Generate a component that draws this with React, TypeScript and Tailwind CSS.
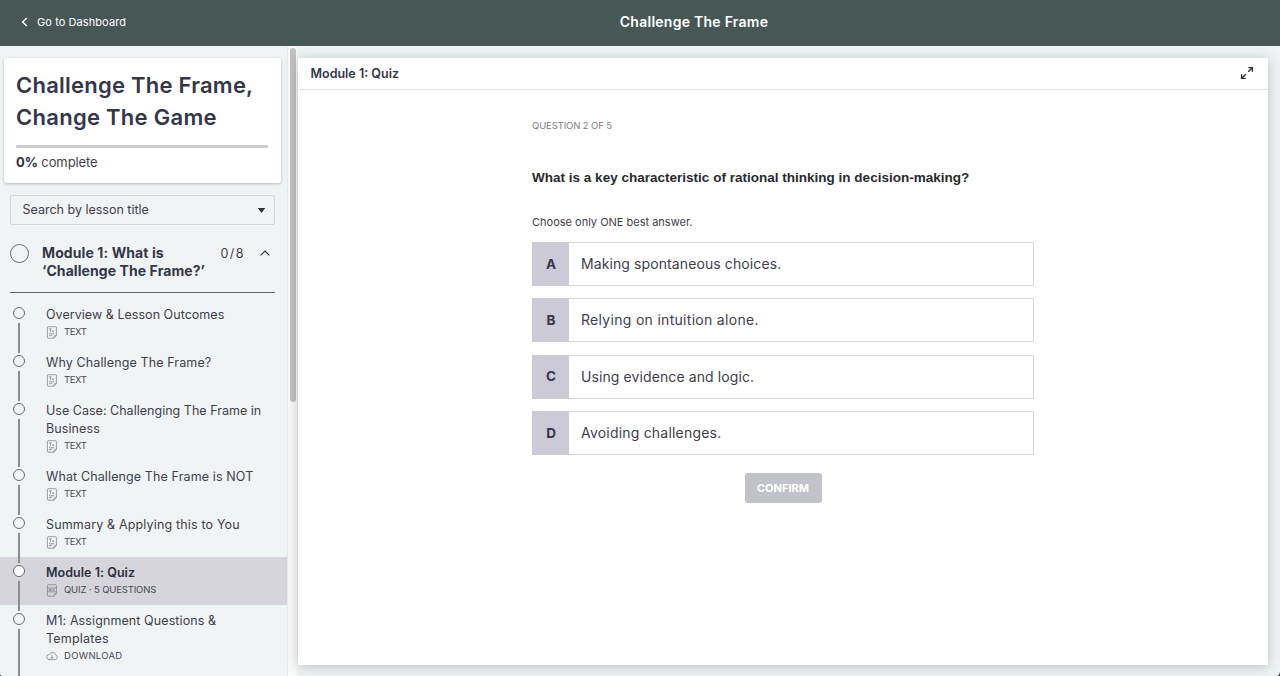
import clsx from "clsx";

type Lesson = {
  lines: { text: string; tracking: string }[];
  kind: "text" | "quiz" | "download";
  meta: string;
  metaTracking: string;
  active?: boolean;
};

const lessons: Lesson[] = [
  { lines: [{ text: "Overview & Lesson Outcomes", tracking: "tracking-[0.04px]" }], kind: "text", meta: "TEXT", metaTracking: "tracking-[-0.4px]" },
  { lines: [{ text: "Why Challenge The Frame?", tracking: "tracking-[0.12px]" }], kind: "text", meta: "TEXT", metaTracking: "tracking-[-0.4px]" },
  {
    lines: [
      { text: "Use Case: Challenging The Frame in", tracking: "tracking-[0.02px]" },
      { text: "Business", tracking: "tracking-[0.1px]" },
    ],
    kind: "text",
    meta: "TEXT",
    metaTracking: "tracking-[-0.4px]",
  },
  { lines: [{ text: "What Challenge The Frame is NOT", tracking: "tracking-[0.12px]" }], kind: "text", meta: "TEXT", metaTracking: "tracking-[-0.4px]" },
  { lines: [{ text: "Summary & Applying this to You", tracking: "tracking-[0.16px]" }], kind: "text", meta: "TEXT", metaTracking: "tracking-[-0.4px]" },
  { lines: [{ text: "Module 1: Quiz", tracking: "tracking-[0.04px]" }], kind: "quiz", meta: "QUIZ · 5 QUESTIONS", metaTracking: "tracking-[-0.14px]", active: true },
  {
    lines: [
      { text: "M1: Assignment Questions &", tracking: "tracking-[0.1px]" },
      { text: "Templates", tracking: "tracking-[0.2px]" },
    ],
    kind: "download",
    meta: "DOWNLOAD",
    metaTracking: "tracking-[0.3px]",
  },
];

const answers = [
  { letter: "A", text: "Making spontaneous choices.", tracking: "tracking-[0.1px]" },
  { letter: "B", text: "Relying on intuition alone.", tracking: "tracking-[0.3px]" },
  { letter: "C", text: "Using evidence and logic.", tracking: "tracking-[0.1px]" },
  { letter: "D", text: "Avoiding challenges.", tracking: "tracking-[0.2px]" },
];

function KindIcon({ kind }: { kind: Lesson["kind"] }) {
  if (kind === "download") {
    return (
      <svg className="shrink-0" width="12" height="12" viewBox="0 0 12 12" fill="none" stroke="#85858f" strokeWidth="0.8" strokeLinecap="round" strokeLinejoin="round">
        <path d="M3 9.6h6.2a2.3 2.3 0 0 0 .5-4.5A3.2 3.2 0 0 0 3.6 4.4 2.6 2.6 0 0 0 3 9.6Z" />
        <path d="M6 5.6v2.6M5 7.3l1 1 1-1" />
      </svg>
    );
  }
  return (
    <svg className="shrink-0" width="12" height="13" viewBox="0 0 12 13" fill="none" stroke="#85858f" strokeWidth="0.8" strokeLinejoin="round">
      <path d="M1.4 1.3a.6.6 0 0 1 .6-.6h7.8a.6.6 0 0 1 .6.6v8.4L8 12.2H2a.6.6 0 0 1-.6-.6Z" />
      <path d="M10.4 9.7H8.6a.6.6 0 0 0-.6.6v1.9" />
      {kind === "text" ? (
        <path d="M2.9 2.9h2.8M4.3 2.9v3M6.2 4.4l1.7 1.7M7.9 4.4 6.2 6.1M3 7.8h5.4M3 9.6h3.2" />
      ) : (
        <path d="M1.4 4h9M1.4 7.8h9M3.2 5.1h1.3v1.5H3.2zM5.7 5v1.7M6.9 5.1h1.5L7 6.6h1.4" />
      )}
    </svg>
  );
}

function LessonRow({ lesson, first }: { lesson: Lesson; first: boolean }) {
  return (
    <li className={clsx("flex shrink-0 pl-[12px]", lesson.active && "bg-[#d5d5db]")}>
      <div className="flex w-[14px] shrink-0 flex-col items-center">
        <span className={clsx("h-[6px] w-[1.5px]", !first && "bg-[#8b8d95]")} />
        <span className={clsx("mt-[2px] size-[12px] shrink-0 rounded-full border-[1.3px] border-[#686a74]", lesson.active && "bg-white")} />
        <span className="mt-[4px] w-[1.5px] grow bg-[#8b8d95]" />
      </div>
      <div className="ml-[20px] pt-[6.5px] pb-[6px] whitespace-nowrap">
        {lesson.lines.map((l) => (
          <p key={l.text} className={clsx("text-[12.5px] leading-[18px]", l.tracking, lesson.active ? "font-semibold text-[#2f3040]" : "text-[#3f404d]")}>
            {l.text}
          </p>
        ))}
        <div className="-mt-[0.5px] flex h-[18px] items-center gap-[6px]">
          <KindIcon kind={lesson.kind} />
          <span className={clsx("text-[9.5px] leading-[18px] text-[#484955]", lesson.metaTracking)}>{lesson.meta}</span>
        </div>
      </div>
    </li>
  );
}

function Sidebar() {
  return (
    <aside className="flex w-[287px] shrink-0 flex-col overflow-hidden">
      <section className="mt-[12px] ml-[4px] h-[125px] w-[277px] shrink-0 rounded-[3px] bg-white px-3 pt-[12px] whitespace-nowrap shadow-[0_1px_3px_rgba(60,70,75,0.35)]">
        <h1 className="text-[22px] leading-[31.5px] font-semibold text-[#35364a]">
          <span className="block tracking-[0.24px]">Challenge The Frame,</span>
          <span className="block tracking-[0.28px]">Change The Game</span>
        </h1>
        <div className="mt-[12px] h-[3px] w-[252px] rounded-full bg-[#cbcad6]" />
        <p className="mt-[5px] text-[13px] leading-[18px] tracking-[-0.1px] text-[#3f404d]">
          <b className="font-bold text-[#2f3040]">0%</b> complete
        </p>
      </section>

      <div className="mt-[12px] ml-[10px] flex h-[30px] w-[265px] shrink-0 items-center justify-between rounded-[2px] border border-[#d3d5d9] pr-[8px] pl-[11.5px]">
        <span className="text-[12.5px] text-[#3f404d]">Search by lesson title</span>
        <svg width="9" height="5" viewBox="0 0 9 5" fill="#2f3040">
          <path d="M.8 0h7.4L4.5 4.9Z" />
        </svg>
      </div>

      <div className="mx-[10px] mt-[19px] flex h-[49px] w-[265px] shrink-0 border-b border-[#62646d]">
        <span className="size-[18.5px] shrink-0 rounded-full border-[1.5px] border-[#686a74]" />
        <h2 className="ml-[13.5px] w-[178.5px] text-[14px] leading-[18px] font-bold whitespace-nowrap text-[#35364a]">
          <span className="block tracking-[0.1px]">Module 1: What is</span>
          <span className="block tracking-[0.08px]">‘Challenge The Frame?’</span>
        </h2>
        <span className="text-[12.5px] leading-[19px] tracking-[1.4px] text-[#3f404d]">0/8</span>
        <svg className="mt-[6px] mr-[5px] ml-auto" width="10" height="6" viewBox="0 0 10 6" fill="none" stroke="#2f3040" strokeWidth="1.2">
          <path d="M.6 5.4 5 1l4.4 4.4" />
        </svg>
      </div>

      <ul className="mt-[6px] flex flex-col">
        {lessons.map((lesson, i) => (
          <LessonRow key={lesson.lines[0].text} lesson={lesson} first={i === 0} />
        ))}
        <li className="flex pl-[12px]">
          <div className="flex w-[14px] justify-center">
            <span className="h-[6px] w-[1.5px] bg-[#8b8d95]" />
          </div>
        </li>
      </ul>
    </aside>
  );
}

function Quiz() {
  return (
    <main className="mt-[12px] ml-px flex h-[607px] w-[970px] shrink-0 flex-col bg-white shadow-[0_2px_12px_rgba(60,75,80,0.3)]">
      <div className="flex h-[32px] shrink-0 items-center justify-between border-b-[1.5px] border-[#e2e3e5] pr-[14px] pl-[12.5px]">
        <h3 className="pt-px text-[12.5px] font-semibold text-[#35364a]">Module 1: Quiz</h3>
        <svg className="mb-px" width="14" height="14" viewBox="0 0 14 14" fill="none" stroke="#2f3040" strokeWidth="1.4">
          <path d="M8.2 5.8 11.8 2.2M5.8 8.2 2.2 11.8" />
          <path d="M8.3 1.6h4.1v4.1M5.7 12.4H1.6V8.3" />
        </svg>
      </div>

      <div className="flex w-[502px] flex-col self-center whitespace-nowrap">
        <p className="mt-[28px] text-[9.5px] leading-[16px] tracking-[-0.12px] text-[#7b7c86]">QUESTION 2 OF 5</p>
        <p className="mt-[34px] font-['Liberation_Sans',sans-serif] text-[13.5px] leading-[20px] font-bold tracking-[0.01px] text-[#2a2a2c]">
          What is a key characteristic of rational thinking in decision-making?
        </p>
        <p className="mt-[26px] text-[11px] leading-[16px] text-[#3f404d]">Choose only ONE best answer.</p>

        <div className="mt-[12px] flex flex-col gap-[12.3px]">
          {answers.map((a) => (
            <button key={a.letter} type="button" className="flex h-[44px] items-stretch border border-[#d6d7da] text-left">
              <span className="-my-px -ml-px flex w-[37px] items-center justify-center bg-[#cbcad6] pl-px text-[13.5px] font-bold text-[#35364a]">{a.letter}</span>
              <span className={clsx("ml-3 self-center text-[14px] leading-[20px] text-[#3f404d]", a.tracking)}>{a.text}</span>
            </button>
          ))}
        </div>

        <button type="button" disabled className="mt-[18px] flex h-[30px] w-[77px] items-center justify-center self-center rounded-[3px] bg-[#c2c2ca] pt-px text-[11px] font-bold text-white">
          CONFIRM
        </button>
      </div>
    </main>
  );
}

export default function App() {
  return (
    <div className="relative flex h-[676px] w-[1280px] flex-col overflow-hidden bg-[#f0f4f5] font-['Inter',sans-serif]">
      <header className="grid h-[46px] shrink-0 grid-cols-[108px_1fr_108px] items-center bg-[#465756] pb-[2px] whitespace-nowrap text-white">
        <a className="flex items-center pl-[21px] text-[11px]">
          <svg className="shrink-0" width="7" height="10" viewBox="0 0 7 10" fill="none" stroke="currentColor" strokeWidth="1.4">
            <path d="M5.8 1 1.6 5l4.2 4" />
          </svg>
          <span className="ml-[9px] tracking-[0.08px]">Go to Dashboard</span>
        </a>
        <div className="pb-px pl-[108px] text-center text-[14px] font-semibold tracking-[0.26px]">Challenge The Frame</div>
      </header>

      <div className="flex min-h-0 grow">
        <Sidebar />
        <div className="w-[10px] shrink-0 border-l border-[#e8eaec] bg-[#fafafa] pt-[2px] pl-[2px]">
          <div className="h-[354px] w-[6px] rounded-full bg-[#c1c1c1]" />
        </div>
        <Quiz />
      </div>

      {/* rounded window corners */}
      <svg className="absolute bottom-0 left-0" width="3" height="3" viewBox="0 0 3 3" fill="#3c4444">
        <path d="M0 1q.2 1.6 2 2H0Z" />
      </svg>
      <svg className="absolute right-0 bottom-0" width="4" height="5" viewBox="0 0 4 5" fill="#3c4444">
        <path d="M4 1Q3.6 4.2.8 5H4Z" />
      </svg>
    </div>
  );
}
